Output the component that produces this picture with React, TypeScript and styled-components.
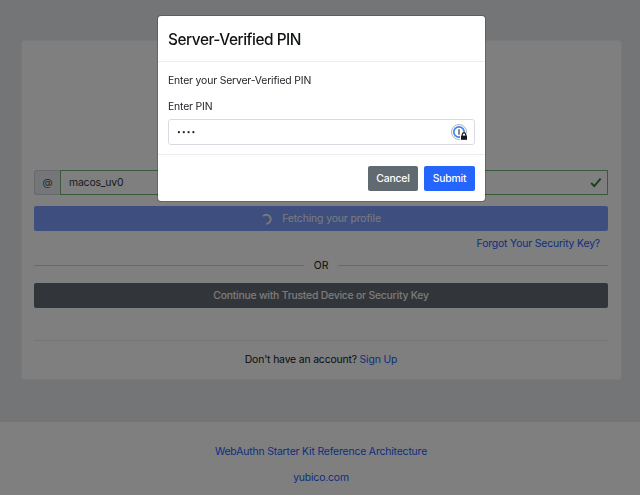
import React from "react";
import styled, { createGlobalStyle } from "styled-components";

const GlobalStyle = createGlobalStyle`
  *, *::before, *::after { box-sizing: border-box; }
  html, body { margin: 0; height: 100%; overflow: hidden; }
  body {
    font-family: Inter, "Liberation Sans", sans-serif;
    font-size: 10.4px;
    line-height: 16px;
    letter-spacing: -0.16px;
    color: #14171a;
    background: #fff;
  }
  p { margin: 0; }
`;

const Page = styled.div`
  height: 495px;
  display: flex;
  flex-direction: column;
`;

const Main = styled.main`
  flex: 0 0 422px;
  padding: 40px 18px 0 21px;
  background: #e8eaed;
`;

const Card = styled.section`
  height: 340px;
  padding: 130px 13px 0 12px;
  display: flex;
  flex-direction: column;
  background: #fff;
  border: 1px solid #f2f3f4;
  border-radius: 3px;
`;

const InputGroup = styled.div`
  flex: 0 0 25px;
  display: flex;
  margin-top: -1px;
`;

const Addon = styled.span`
  width: 26px;
  display: grid;
  place-items: center;
  color: #495057;
  background: #e9ecef;
  border: 1px solid #ced4da;
  border-right: 0;
  border-radius: 3px 0 0 3px;
`;

const UserField = styled.div`
  flex: 1;
  display: flex;
  align-items: center;
  justify-content: space-between;
  padding: 0 5px 0 8px;
  color: #30363b;
  border: 1px solid #73b47a;
`;

const BlockButton = styled.button<{ $tone: string; $gap: number; $weight: number; $spacing: string }>`
  flex: 0 0 25px;
  display: flex;
  align-items: center;
  justify-content: center;
  gap: 9px;
  margin: ${(p) => p.$gap}px 0 0;
  padding: 0;
  border: 0;
  border-radius: 2px;
  font: inherit;
  font-weight: ${(p) => p.$weight};
  letter-spacing: ${(p) => p.$spacing};
  color: #f5f6f7;
  background: ${(p) => p.$tone};
`;

const Link = styled.a`
  color: #1a5cff;
  text-decoration: none;
`;

const Forgot = styled.div`
  padding: 5px 8px 0 0;
  text-align: right;
`;

const Divider = styled.div`
  display: flex;
  align-items: center;
  gap: 10px;
  margin-top: 6px;
  height: 16px;

  &::before, &::after {
    content: "";
    flex: 1;
    height: 1px;
    margin-bottom: 1px;
    background: #d2d3d5;
  }
`;

const SignUpRow = styled.div`
  margin-top: 32px;
  padding-top: 11px;
  text-align: center;
  border-top: 1px solid #e9e9e9;
`;

const Footer = styled.footer`
  flex: 1;
  display: flex;
  flex-direction: column;
  align-items: center;
  gap: 10px;
  padding: 22px 0 0 2px;
`;

const Backdrop = styled.div`
  position: fixed;
  inset: 0;
  display: flex;
  align-items: flex-start;
  justify-content: center;
  padding: 15px 0 0 3px;
  background: rgba(0, 0, 0, 0.5);
`;

const Dialog = styled.div`
  width: 329px;
  height: 187px;
  display: flex;
  flex-direction: column;
  background: #fff;
  background-clip: padding-box;
  border: 1px solid rgba(0, 0, 0, 0.2);
  border-radius: 4px;
  color: #23272b;
`;

const DialogHeader = styled.h1`
  flex: 0 0 46px;
  margin: 0;
  padding: 13px 10px 0;
  font-size: 15.4px;
  line-height: 22px;
  font-weight: 500;
  letter-spacing: -0.46px;
  color: #111315;
  border-bottom: 1px solid #ececed;
`;

const DialogBody = styled.div`
  flex: 0 0 93px;
  padding: 11px 10px 0;
  border-bottom: 1px solid #ececed;
`;

const PinLabel = styled.label`
  display: block;
  margin-top: 10px;
`;

const PinField = styled.div`
  height: 26px;
  margin-top: 4px;
  padding: 0 6px 0 8px;
  display: flex;
  align-items: center;
  justify-content: space-between;
  border: 1px solid #d8dbe2;
  border-radius: 3px;
`;

const DialogFooter = styled.div`
  display: flex;
  justify-content: flex-end;
  gap: 6px;
  padding: 11px 10px 0;
`;

const ActionButton = styled.button<{ $primary?: boolean }>`
  width: ${(p) => (p.$primary ? 51 : 50)}px;
  height: 25px;
  padding: 1px 0 0;
  border: 0;
  border-radius: 2px;
  font: inherit;
  font-weight: 500;
  letter-spacing: -0.18px;
  color: #fff;
  background: ${(p) => (p.$primary ? "#2465fb" : "#626a71")};
`;

const CheckIcon = () => (
  <svg width="12" height="12" viewBox="0 0 12 12" fill="none">
    <path d="M1.2 6 4.3 9.2 10.6 1.6" stroke="#28833a" strokeWidth="1.9" />
  </svg>
);

const SpinnerIcon = () => (
  <svg width="12" height="12" viewBox="0 0 12 12" fill="none">
    <path d="M2 3.2A4.5 4.5 0 1 1 5.2 10.8" stroke="#f2f3f5" strokeWidth="1.9" />
  </svg>
);

const Dots = () => (
  <svg width="18" height="4" viewBox="0 0 18 4" fill="#202327">
    {[1.9, 6.8, 11.6, 16.4].map((cx) => (
      <circle key={cx} cx={cx} cy="2.2" r="1.1" />
    ))}
  </svg>
);

const PasswordManagerIcon = () => (
  <svg width="18" height="18" viewBox="0 0 18 18" fill="none">
    <circle cx="9" cy="9" r="7.5" stroke="#b4b6b9" strokeWidth="1" />
    <circle cx="9" cy="9" r="5.2" stroke="#3c84ee" strokeWidth="1.7" />
    <path d="M9 6.2v5.6" stroke="#55616f" strokeWidth="1.5" />
    <path d="M10 10.5h8V18h-8z" fill="#fff" />
    <path d="M12.2 13v-1.3a1.8 1.8 0 0 1 3.6 0V13" stroke="#222" strokeWidth="1.2" />
    <path d="M11 12.6h6v4.2h-6z" fill="#171717" />
  </svg>
);

export default function App() {
  return (
    <>
      <GlobalStyle />
      <Page>
        <Main>
          <Card>
            <InputGroup>
              <Addon>@</Addon>
              <UserField>
                <span>macos_uv0</span>
                <CheckIcon />
              </UserField>
            </InputGroup>
            <BlockButton $tone="#7b9dff" $gap={11} $weight={400} $spacing="-0.12px">
              <SpinnerIcon />
              Fetching your profile
            </BlockButton>
            <Forgot>
              <Link>Forgot Your Security Key?</Link>
            </Forgot>
            <Divider>OR</Divider>
            <BlockButton $tone="#646b73" $gap={9} $weight={500} $spacing="-0.22px">
              Continue with Trusted Device or Security Key
            </BlockButton>
            <SignUpRow>
              Don't have an account? <Link>Sign Up</Link>
            </SignUpRow>
          </Card>
        </Main>
        <Footer>
          <Link>WebAuthn Starter Kit Reference Architecture</Link>
          <Link>yubico.com</Link>
        </Footer>
      </Page>
      <Backdrop>
        <Dialog role="dialog">
          <DialogHeader>Server-Verified PIN</DialogHeader>
          <DialogBody>
            <p>Enter your Server-Verified PIN</p>
            <PinLabel>Enter PIN</PinLabel>
            <PinField>
              <Dots />
              <PasswordManagerIcon />
            </PinField>
          </DialogBody>
          <DialogFooter>
            <ActionButton>Cancel</ActionButton>
            <ActionButton $primary>Submit</ActionButton>
          </DialogFooter>
        </Dialog>
      </Backdrop>
    </>
  );
}
